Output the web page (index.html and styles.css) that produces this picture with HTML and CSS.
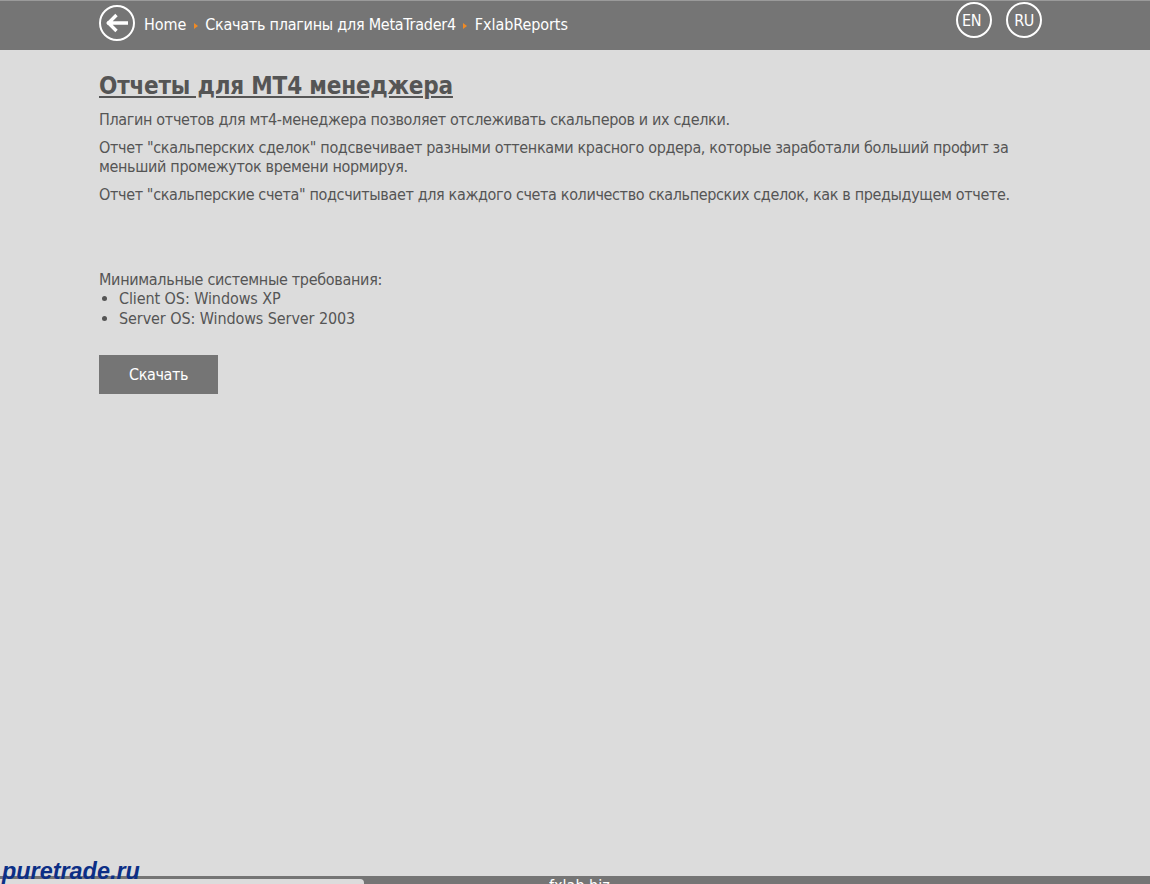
FILE: index.html
```html
<!DOCTYPE html>
<html lang="ru">
<head>
<meta charset="utf-8">
<title>FxlabReports</title>
<link rel="stylesheet" href="styles.css">
</head>
<body>
<div class="page">
  <header class="topbar">
    <div class="inner">
      <a class="back" href="#" aria-label="Назад">
        <svg width="36" height="36" viewBox="0 0 36 36"><circle cx="18" cy="18" r="17" fill="none" stroke="#fff" stroke-width="2"/><path d="M29 18H8M17.5 10l-8 8 8 8" fill="none" stroke="#fff" stroke-width="3.4"/></svg>
      </a>
      <nav class="crumbs">
        <a href="#">Home</a><span class="sep"></span><a class="ru" href="#">Скачать плагины для MetaTrader4</a><span class="sep"></span><a href="#">FxlabReports</a>
      </nav>
      <div class="langs">
        <a class="lang lang-en" href="#">EN</a>
        <a class="lang" href="#">RU</a>
      </div>
    </div>
  </header>
  <main class="content">
    <h1 class="title">Отчеты для МТ4 менеджера</h1>
    <p class="para">Плагин отчетов для мт4-менеджера позволяет отслеживать скальперов и их сделки.</p>
    <p class="para">Отчет "скальперских сделок" подсвечивает разными оттенками красного ордера, которые заработали больший профит за меньший промежуток времени нормируя.</p>
    <p class="para para-tight">Отчет "скальперские счета" подсчитывает для каждого счета количество скальперских сделок, как в предыдущем отчете.</p>
    <div class="reqs">Минимальные системные требования:
      <ul class="reqlist">
        <li>Client OS: Windows XP</li>
        <li>Server OS: Windows Server 2003</li>
      </ul>
    </div>
    <a class="download" href="#">Скачать</a>
  </main>
  <footer class="footer">
    <div class="tab"></div>
    <div class="site">fxlab.biz</div>
    <div class="mark">puretrade.ru</div>
  </footer>
</div>
</body>
</html>
```
FILE: styles.css
```css
html, body { margin: 0; padding: 0; height: 100%; overflow: hidden; }
body { background: #dcdcdc; color: #555; font-family: "DejaVu Sans Condensed", "DejaVu Sans", sans-serif; font-size: 16px; }
a { color: inherit; text-decoration: none; }
.page { height: 884px; display: flex; flex-direction: column; }
.topbar { height: 49px; background: #757575; border-top: 1px solid #9a9a9a; flex: none; }
.inner { margin: 0 108px 0 99px; display: flex; align-items: flex-start; padding-top: 4px; }
.back { display: block; width: 36px; height: 36px; }
.crumbs { margin: 1px 0 0 9px; height: 36px; display: flex; align-items: center; color: #fff; white-space: nowrap; font-size: 16px; letter-spacing: -0.08px; }
.ru { letter-spacing: -0.25px; }
.sep { width: 0; height: 0; border-left: 4px solid #f08a24; border-top: 3px solid transparent; border-bottom: 3px solid transparent; margin: 3px 7.5px 0 7.5px; }
.langs { margin-left: auto; display: flex; gap: 14px; margin-top: -3px; }
.lang { width: 32px; height: 32px; border: 2px solid #fff; border-radius: 50%; color: #fff; display: flex; align-items: center; justify-content: center; font-size: 16px; letter-spacing: -0.5px; }
.lang-en { width: 27px; padding-right: 5px; }
.content { flex: 1; padding: 0 108px 0 99px; }
.title { margin: 21px 0 0; font-size: 24px; line-height: 30px; font-weight: bold; text-decoration: underline; color: #555; letter-spacing: -0.2px; }
.para { margin: 9px 0 0; line-height: 19px; letter-spacing: -0.34px; }
.para-tight { letter-spacing: -0.36px; }
.reqs { margin-top: 66px; line-height: 19px; letter-spacing: -0.31px; }
.reqlist { margin: 0; padding: 0 0 0 20px; letter-spacing: -0.09px; }
.reqlist li + li { margin-top: 1px; }
.download { display: flex; align-items: center; justify-content: center; width: 119px; height: 39px; margin-top: 27px; background: #757575; color: #fff; letter-spacing: -0.4px; }
.footer { position: relative; height: 8px; background: #757575; flex: none; }
.tab { position: absolute; left: 0; top: 3px; width: 364px; height: 5px; background: #dcdcdc; border-top-right-radius: 4px; }
.site { position: absolute; left: 549px; top: 0; color: #fff; line-height: 19px; height: 8px; overflow: hidden; font-size: 16px; }
.mark { position: absolute; left: 2px; bottom: 0; font-family: "Liberation Sans", Arial, sans-serif; font-weight: bold; font-style: italic; font-size: 23.4px; line-height: 26px; color: #0c2f86; }
```
